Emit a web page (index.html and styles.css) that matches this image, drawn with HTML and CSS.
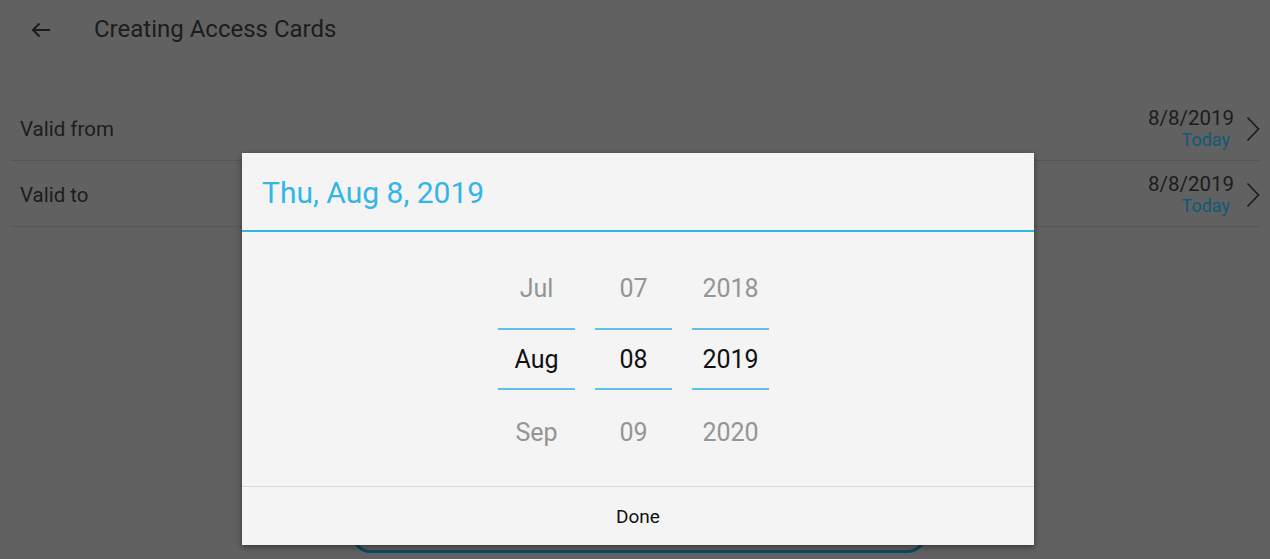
FILE: index.html
```html
<!DOCTYPE html>
<html>
<head>
	<meta name="viewport" content="width=device-width, initial-scale=1.0">
	<title>Creating Access Cards</title>
	<link rel="stylesheet" href="styles.css">
</head>
<body>

	<div id="page">
		<div class="toolbar">
			<svg class="backIcon" width="24" height="24" viewBox="0 0 24 24">
				<path d="M21 12H4M10.5 5.5L4 12l6.5 6.5" fill="none" stroke="#1a1a1a" stroke-width="2"/>
			</svg>
			<h1 class="title">Creating Access Cards</h1>
		</div>

		<div class="list">
			<div class="row">
				<span class="label">Valid from</span>
				<div class="value">
					<span class="date">8/8/2019</span>
					<span class="hint">Today</span>
				</div>
				<svg class="chevron" width="14" height="26" viewBox="0 0 14 26">
					<path d="M1.5 1.5l11 11.5-11 11.5" fill="none" stroke="#1a1a1a" stroke-width="1.6"/>
				</svg>
			</div>
			<div class="row">
				<span class="label">Valid to</span>
				<div class="value">
					<span class="date">8/8/2019</span>
					<span class="hint">Today</span>
				</div>
				<svg class="chevron" width="14" height="26" viewBox="0 0 14 26">
					<path d="M1.5 1.5l11 11.5-11 11.5" fill="none" stroke="#1a1a1a" stroke-width="1.6"/>
				</svg>
			</div>
		</div>

		<div class="bottomArea">
			<div class="createButton"></div>
		</div>
	</div>

	<!-- date picker dialog -->
	<div class="dialog">
		<div class="dialogHeader">Thu, Aug 8, 2019</div>
		<div class="picker">
			<div class="column">
				<div class="cell faded">Jul</div>
				<div class="cell current">Aug</div>
				<div class="cell faded">Sep</div>
			</div>
			<div class="column">
				<div class="cell faded">07</div>
				<div class="cell current">08</div>
				<div class="cell faded">09</div>
			</div>
			<div class="column">
				<div class="cell faded">2018</div>
				<div class="cell current">2019</div>
				<div class="cell faded">2020</div>
			</div>
		</div>
		<div class="dialogFooter">Done</div>
	</div>

</body>
</html>
```

FILE: styles.css
```css
html, body{
	margin: 0;
	height: 100%;
}

body{
	background-color: #616161;
	font-family: Roboto, "Noto Sans", sans-serif;
	color: #1c1c1c;
	overflow: hidden;
	position: relative;
}

#page{
	height: 559px;
	display: flex;
	flex-direction: column;
}

.toolbar{
	height: 58px;
	display: flex;
	align-items: center;
	padding-left: 29px;
}

.backIcon{
	margin-right: 41px;
	margin-top: 2px;
}

.title{
	margin: 0;
	font-size: 24px;
	font-weight: normal;
	color: #1c1c1c;
}

.list{
	margin-top: 37px;
	padding: 0 10px;
}

.row{
	height: 65px;
	display: flex;
	align-items: center;
	border-bottom: 1px solid #565656;
	padding-left: 10px;
}

.label{
	flex: 1;
	font-size: 20.5px;
	margin-top: 2px;
}

.value{
	display: flex;
	flex-direction: column;
	align-items: flex-end;
	margin-right: 12px;
	margin-top: 2px;
}

.date{
	font-size: 20.5px;
	line-height: 22px;
}

.hint{
	font-size: 18px;
	line-height: 21px;
	color: #0e5a78;
	margin-right: 4px;
}

.chevron{
	margin-top: 2px;
}

.bottomArea{
	flex: 1;
	display: flex;
	justify-content: center;
	align-items: flex-end;
	padding-bottom: 6px;
	padding-left: 8px;
}

.createButton{
	width: 570px;
	height: 44px;
	border: 3px solid #0d4861;
	border-radius: 20px;
}

.dialog{
	position: absolute;
	left: 242px;
	top: 153px;
	width: 792px;
	height: 392px;
	background-color: #f4f4f4;
	box-shadow: 0 2px 6px rgba(0, 0, 0, 0.45);
	display: flex;
	flex-direction: column;
}

.dialogHeader{
	height: 79px;
	box-sizing: border-box;
	padding-left: 20px;
	padding-top: 2px;
	display: flex;
	align-items: center;
	font-size: 30px;
	color: #33b5e5;
	border-bottom: 2px solid #33b5e5;
}

.picker{
	flex: 1;
	display: flex;
	justify-content: center;
	gap: 20px;
	padding-top: 26px;
	padding-right: 9px;
}

.column{
	width: 77px;
	display: flex;
	flex-direction: column;
}

.cell{
	height: 60px;
	box-sizing: border-box;
	display: flex;
	align-items: center;
	justify-content: center;
	font-size: 25px;
}

.faded{
	color: #959595;
}

.faded:last-child{
	padding-top: 4px;
}

.current{
	height: 62px;
	color: #111;
	border-top: 2px solid #5ec1e8;
	border-bottom: 2px solid #5ec1e8;
	margin: 10px 0;
}

.dialogFooter{
	height: 58px;
	border-top: 1px solid #d8d8d8;
	display: flex;
	align-items: center;
	justify-content: center;
	font-size: 19px;
	color: #111;
}
```
